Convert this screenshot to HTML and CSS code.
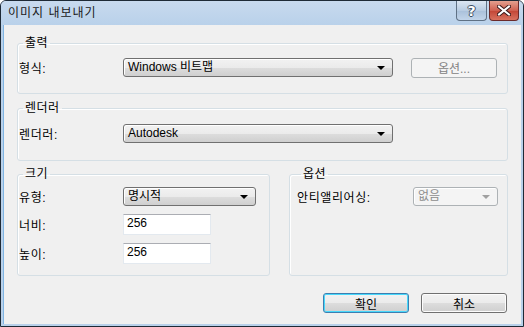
FILE: index.html
```html
<!DOCTYPE html>
<html lang="ko">
<head>
  <meta charset="UTF-8">
  <title>이미지 내보내기</title>
  <link rel="stylesheet" href="styles.css">
</head>
<body>
  <div class="window">
    <div class="titlebar">
      <span class="title">이미지 내보내기</span>
      <div class="caption-buttons">
        <button class="cap help">?</button>
        <button class="cap close">
          <svg width="14" height="11" viewBox="0 0 14 11">
            <path d="M2 1.5 L12 9.5 M12 1.5 L2 9.5" stroke="#3b1a1a" stroke-width="4" stroke-linecap="square"/>
            <path d="M2 1.5 L12 9.5 M12 1.5 L2 9.5" stroke="#fff" stroke-width="2" stroke-linecap="square"/>
          </svg>
        </button>
      </div>
    </div>

    <div class="client">
      <fieldset class="group group-output">
        <legend>출력</legend>
        <div class="row">
          <span class="label">형식:</span>
          <div class="combo combo-wide">Windows 비트맵<span class="arrow"></span></div>
          <button class="btn btn-options" disabled>옵션...</button>
        </div>
      </fieldset>

      <fieldset class="group group-render">
        <legend>렌더러</legend>
        <div class="row">
          <span class="label">렌더러:</span>
          <div class="combo combo-wide">Autodesk<span class="arrow"></span></div>
        </div>
      </fieldset>

      <div class="split">
        <fieldset class="group group-size">
          <legend>크기</legend>
          <div class="row">
            <span class="label">유형:</span>
            <div class="combo combo-type">명시적<span class="arrow"></span></div>
          </div>
          <div class="row row-input">
            <span class="label">너비:</span>
            <div class="textbox">256</div>
          </div>
          <div class="row row-input">
            <span class="label">높이:</span>
            <div class="textbox">256</div>
          </div>
        </fieldset>

        <fieldset class="group group-opts">
          <legend>옵션</legend>
          <div class="row">
            <span class="label label-aa">안티앨리어싱:</span>
            <div class="combo combo-aa disabled">없음<span class="arrow"></span></div>
          </div>
        </fieldset>
      </div>

      <div class="actions">
        <button class="btn btn-default">확인</button>
        <button class="btn">취소</button>
      </div>
    </div>
  </div>
</body>
</html>
```

FILE: styles.css
```css
html, body { margin: 0; padding: 0; }
body {
  width: 524px;
  height: 327px;
  overflow: hidden;
  font-family: "Liberation Sans", "Noto Sans CJK KR", sans-serif;
  font-size: 12px;
  color: #000;
  background: #fff;
}

.window {
  box-sizing: border-box;
  width: 524px;
  height: 327px;
  border: 1px solid #1e2a36;
  border-radius: 6px 6px 0 0;
  background: #b9d1ea;
  display: flex;
  flex-direction: column;
}

.titlebar {
  height: 24px;
  flex: none;
  display: flex;
  justify-content: space-between;
  align-items: flex-start;
  padding: 0 4px 0 7px;
  border-radius: 5px 5px 0 0;
  background: linear-gradient(#c8daee, #b9d1ea);
}
.title {
  line-height: 24px;
  font-size: 12px;
  color: #1a1a1a;
  letter-spacing: 1px;
}
.caption-buttons { display: flex; gap: 2px; }
.cap {
  box-sizing: border-box;
  width: 31px;
  height: 20px;
  padding: 0;
  border: 1px solid #5f7185;
  border-top: none;
  border-radius: 0 0 4px 4px;
  display: flex;
  align-items: center;
  justify-content: center;
  font-family: "DejaVu Sans", sans-serif;
  font-weight: bold;
}
.help {
  background: linear-gradient(#dce6f2, #b8cce2 50%, #a9c0da 51%, #c2d5ea);
  color: #fff;
  font-size: 14px;
  text-shadow: 1px 0 #3e4f63, -1px 0 #3e4f63, 0 1px #3e4f63, 0 -1px #3e4f63;
}
.close {
  width: 30px;
  border-color: #6b2a2a;
  background: linear-gradient(#e3a08f, #cf6050 50%, #c24535 51%, #d8725f);
}

.client {
  flex: 1;
  margin: 0 2px 2px 2px;
  padding: 11px 13px 0 13px;
  background: #f0f0f0;
  border-left: 1px solid #7fb4e2;
}

.group {
  margin: 0;
  padding: 0 0 0 1px;
  border: 1px solid #d5dfe5;
  border-radius: 3px;
  box-shadow: inset 1px 1px #fff;
  min-width: 0;
}
.group legend {
  margin-left: 4px;
  padding: 0 2px;
  line-height: 14px;
  letter-spacing: 0.5px;
}
.group-output { padding-top: 8px; padding-bottom: 16px; }
.group-render { margin-top: 7px; padding-top: 9px; padding-bottom: 17px; }

.row {
  display: flex;
  align-items: center;
  height: 19px;
}
.row-input { height: 21px; margin-top: 8px; }
.label { width: 104px; flex: none; letter-spacing: 0.6px; }
.label-aa { width: 116px; }

.combo {
  box-sizing: border-box;
  position: relative;
  height: 19px;
  line-height: 17px;
  padding-left: 4px;
  border: 1px solid #707070;
  border-radius: 3px;
  background: linear-gradient(#f2f2f2, #ebebeb 50%, #dddddd 51%, #cfcfcf);
  box-shadow: inset 1px 1px #fff;
}
.combo .arrow {
  position: absolute;
  right: 7px;
  top: 7px;
  width: 0;
  height: 0;
  border-left: 4px solid transparent;
  border-right: 4px solid transparent;
  border-top: 4px solid #000;
}
.combo-wide { width: 270px; }
.combo-type { width: 133px; }
.combo-aa { width: 85px; }
.combo.disabled {
  color: #8d8d8d;
  border-color: #adb2b5;
  background: #f4f4f4;
}
.combo.disabled .arrow { border-top-color: #a0a0a0; }

.textbox {
  box-sizing: border-box;
  width: 88px;
  height: 21px;
  line-height: 17px;
  padding-left: 3px;
  background: #fff;
  border: 1px solid #e3e9ef;
  border-top-color: #abadb3;
}

.split {
  display: flex;
  gap: 19px;
  margin-top: 6px;
}
.group-size { width: 253px; box-sizing: border-box; padding-top: 6px; padding-bottom: 11px; }
.group-opts { flex: 1; padding-top: 6px; padding-left: 7px; }

.btn {
  box-sizing: border-box;
  width: 86px;
  height: 20px;
  padding: 0;
  font: inherit;
  color: #000;
  border: 1px solid #707070;
  border-radius: 3px;
  background: linear-gradient(#f2f2f2, #ebebeb 50%, #dddddd 51%, #cfcfcf);
  box-shadow: inset 0 0 0 1px #fcfcfc;
}
.btn-options {
  margin-left: 18px;
  color: #838383;
  border-color: #adb2b5;
  background: #f4f4f4;
  box-shadow: none;
}
.btn-default {
  border-color: #3c7fb1;
  box-shadow: inset 0 0 0 1px #48d8fb;
}

.actions {
  display: flex;
  justify-content: flex-end;
  gap: 12px;
  margin-top: 17px;
  padding-right: 1px;
}
```
